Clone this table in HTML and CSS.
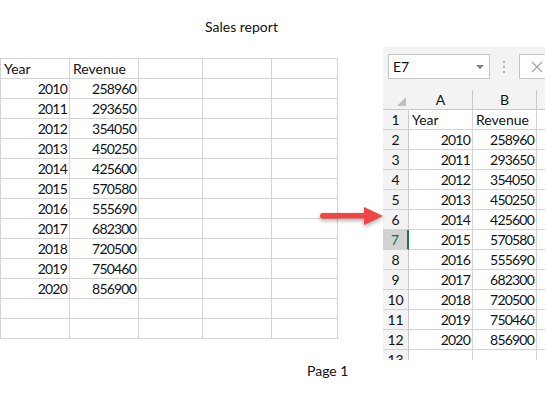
FILE: index.html
```html
<!DOCTYPE html>
<html lang="en">
<head>
    <meta charset="UTF-8">
    <meta name="viewport" content="width=device-width, initial-scale=1.0">
    <title>Sales report - Print Preview</title>
    <link rel="stylesheet" href="styles.css">
</head>
<body>
<div class="screen">

    <!-- Printed page -->
    <div class="page">
        <div class="page-title">Sales report</div>
        <div class="sheet">
            <div>Year</div><div>Revenue</div><div></div><div></div><div></div>
            <div class="num">2010</div><div class="num">258960</div><div></div><div></div><div></div>
            <div class="num">2011</div><div class="num">293650</div><div></div><div></div><div></div>
            <div class="num">2012</div><div class="num">354050</div><div></div><div></div><div></div>
            <div class="num">2013</div><div class="num">450250</div><div></div><div></div><div></div>
            <div class="num">2014</div><div class="num">425600</div><div></div><div></div><div></div>
            <div class="num">2015</div><div class="num">570580</div><div></div><div></div><div></div>
            <div class="num">2016</div><div class="num">555690</div><div></div><div></div><div></div>
            <div class="num">2017</div><div class="num">682300</div><div></div><div></div><div></div>
            <div class="num">2018</div><div class="num">720500</div><div></div><div></div><div></div>
            <div class="num">2019</div><div class="num">750460</div><div></div><div></div><div></div>
            <div class="num">2020</div><div class="num">856900</div><div></div><div></div><div></div>
            <div></div><div></div><div></div><div></div><div></div>
            <div></div><div></div><div></div><div></div><div></div>
        </div>
        <div class="page-footer">Page 1</div>
    </div>

    <!-- Excel window -->
    <div class="excel">
        <div class="formula-bar">
            <div class="name-box"><span>E7</span><span class="caret"></span></div>
            <svg class="dots" width="4" height="14" viewBox="0 0 4 14">
                <rect x="1" y="1" width="2" height="2" fill="#b4b4b4"/>
                <rect x="1" y="6" width="2" height="2" fill="#b4b4b4"/>
                <rect x="1" y="11" width="2" height="2" fill="#b4b4b4"/>
            </svg>
            <div class="fx-box">
                <svg width="14" height="14" viewBox="0 0 14 14">
                    <path d="M2 2 L12 12 M12 2 L2 12" stroke="#a6a6a6" stroke-width="1.3" fill="none"/>
                </svg>
            </div>
        </div>
        <div class="grid">
            <div class="corner"><svg width="25" height="19" viewBox="0 0 25 19"><polygon points="23,7 23,16 14,16" fill="#bdbdbd"/></svg></div><div class="col-head">A</div><div class="col-head">B</div><div class="col-head"></div>
            <div class="row-head">1</div><div>Year</div><div>Revenue</div><div></div>
            <div class="row-head">2</div><div class="num">2010</div><div class="num">258960</div><div></div>
            <div class="row-head">3</div><div class="num">2011</div><div class="num">293650</div><div></div>
            <div class="row-head">4</div><div class="num">2012</div><div class="num">354050</div><div></div>
            <div class="row-head">5</div><div class="num">2013</div><div class="num">450250</div><div></div>
            <div class="row-head">6</div><div class="num">2014</div><div class="num">425600</div><div></div>
            <div class="row-head selected">7</div><div class="num">2015</div><div class="num">570580</div><div></div>
            <div class="row-head">8</div><div class="num">2016</div><div class="num">555690</div><div></div>
            <div class="row-head">9</div><div class="num">2017</div><div class="num">682300</div><div></div>
            <div class="row-head">10</div><div class="num">2018</div><div class="num">720500</div><div></div>
            <div class="row-head">11</div><div class="num">2019</div><div class="num">750460</div><div></div>
            <div class="row-head">12</div><div class="num">2020</div><div class="num">856900</div><div></div>
            <div class="row-head">13</div><div></div><div></div><div></div>
        </div>
    </div>

    <!-- Pointer arrow -->
    <svg class="arrow" width="70" height="32" viewBox="0 0 70 32">
        <rect x="4" y="13" width="46" height="5.5" rx="2.7" fill="#f04545"/>
        <polygon points="48,7 67,16 48,25" fill="#f04545"/>
    </svg>

</div>
</body>
</html>
```

FILE: styles.css
```css
/* General Reset */
* {
    margin: 0;
    padding: 0;
    box-sizing: border-box;
}

body {
    background: #ffffff;
    color: #111111;
    font-family: "Lato", "Open Sans", sans-serif;
    font-size: 14px;
}

.screen {
    position: relative;
    display: flex;
    width: 545px;
    height: 393px;
    overflow: hidden;
}

/* Printed page */
.page {
    width: 383px;
    display: flex;
    flex-direction: column;
}

.page-title {
    padding: 17px 0 0 205px;
    height: 37px;
    line-height: 20px;
    margin-bottom: 21px;
}

.sheet {
    display: grid;
    grid-template-columns: 69px 69px 64px 69px 66px;
    width: max-content;
    border-top: 1px solid #d4d4d4;
    border-left: 1px solid #d4d4d4;
}

.sheet div,
.grid div {
    height: 20px;
    padding: 0 2px 0 3px;
    line-height: 20px;
    white-space: nowrap;
    border-right: 1px solid #d4d4d4;
    border-bottom: 1px solid #d4d4d4;
}

.sheet .num,
.grid .num {
    text-align: right;
    padding-right: 2px;
    letter-spacing: -0.8px;
}

.page-footer {
    margin-top: 22px;
    padding-left: 307px;
    line-height: 20px;
}

/* Excel window */
.excel {
    flex: 1;
    margin-top: 47px;
    height: 313px;
    background: #f3f3f3;
    overflow: hidden;
}

.formula-bar {
    display: flex;
    align-items: flex-start;
    height: 43px;
    padding: 7px 0 0 5px;
}

.name-box {
    display: flex;
    align-items: center;
    justify-content: space-between;
    flex-shrink: 0;
    width: 102px;
    height: 25px;
    padding: 0 5px 0 4px;
    background: #ffffff;
    border: 1px solid #c6c6c6;
}

.caret {
    width: 0;
    height: 0;
    border-left: 4px solid transparent;
    border-right: 4px solid transparent;
    border-top: 4px solid #7a7a7a;
}

.dots {
    flex-shrink: 0;
    margin: 6px 0 0 12px;
}

.fx-box {
    display: flex;
    align-items: center;
    flex-shrink: 0;
    width: 60px;
    height: 25px;
    margin-left: 13px;
    padding-left: 10px;
    background: #ffffff;
    border: 1px solid #c6c6c6;
}

.grid {
    display: grid;
    grid-template-columns: 26px 64px 64px 20px;
    background: #ffffff;
}

.grid .corner,
.grid .col-head {
    background: #f3f3f3;
    text-align: center;
    padding: 0;
    line-height: 19px;
    border-right: 1px solid #c8c8c8;
    border-bottom: 1px solid #c8c8c8;
}

.grid .corner {
    border-right-color: #f3f3f3;
}

.grid .row-head {
    background: #f3f3f3;
    text-align: center;
    padding: 0;
    border-right: 1px solid #c8c8c8;
    border-bottom: 1px solid #d4d4d4;
}

.grid .row-head.selected {
    background: #d2d2d2;
    color: #217346;
    border-right: 2px solid #217346;
}

/* Pointer arrow */
.arrow {
    position: absolute;
    left: 316px;
    top: 200px;
    filter: drop-shadow(0 2px 2px rgba(0, 0, 0, 0.35));
}
```
